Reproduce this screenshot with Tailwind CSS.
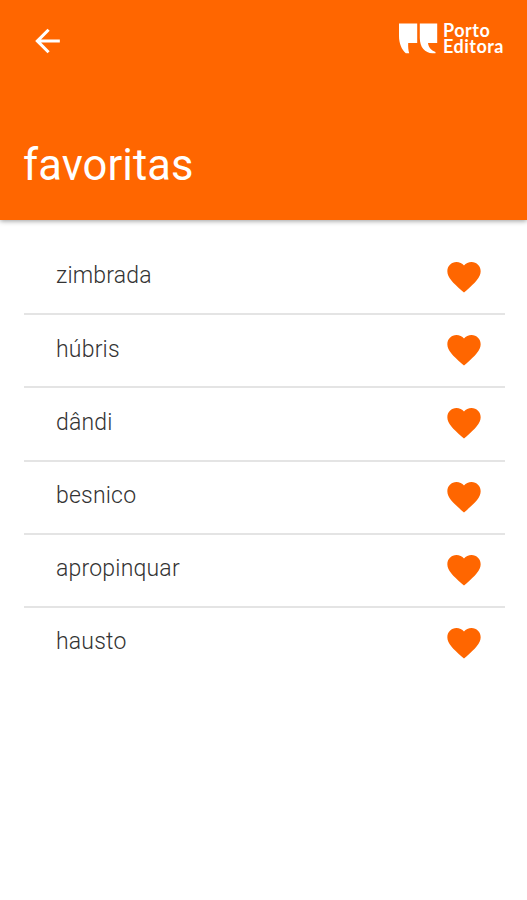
<!DOCTYPE html>
<html lang="pt">
<head>
    <meta charset="UTF-8">
    <meta name="viewport" content="width=device-width, initial-scale=1.0">
    <title>favoritas</title>
    <script src="https://cdn.jsdelivr.net/npm/@tailwindcss/browser@4"></script>
</head>
<body class="bg-white min-h-screen font-[Roboto,sans-serif]">
    <!-- Header -->
    <header class="h-[220px] bg-[#ff6600] text-white shadow-[0_1px_5px_rgba(0,0,0,0.4)] flex flex-col justify-between pt-[22px] pb-[24px] px-[23px]">
        <div class="flex justify-between items-start">
            <button class="ml-[6px]" aria-label="Voltar">
                <svg class="w-[37px] h-[38px]" viewBox="0 0 24 24" fill="currentColor">
                    <path d="M20 11H7.83l5.59-5.59L12 4l-8 8 8 8 1.41-1.41L7.83 13H20v-2z"/>
                </svg>
            </button>
            <div class="flex items-start gap-[5px]">
                <svg class="w-[40px] h-[33px]" viewBox="0 0 40 33" fill="currentColor">
                    <path d="M1 1.5H19.2V21H10.2C10 25 10.3 28.5 11.2 31.3H7.8C3.7 27.5 1 21.5 1 14z"/>
                    <path d="M21.8 1.5H39.2V21H30C30.5 25 33 28.5 37.5 30V31.3H34.5C27 31 21.8 25.5 21.8 16z"/>
                </svg>
                <div class="font-[Lato,sans-serif] font-bold text-[18px] leading-[16px] tracking-[0.5px]">
                    <div>Porto</div>
                    <div>Editora</div>
                </div>
            </div>
        </div>
        <h1 class="text-[43.5px] leading-[60px] tracking-[0.1px]">favoritas</h1>
    </header>

    <!-- Word list -->
    <ul id="wordList" class="mt-[22px] ml-[24px] mr-[22px] text-[23px] font-light tracking-[0.2px] text-[#333333]"></ul>

    <script>
        const words = ["zimbrada", "húbris", "dândi", "besnico", "apropinquar", "hausto"];
        const wordList = document.getElementById("wordList");

        words.forEach((word) => {
            const li = document.createElement("li");
            li.className = "h-[73.2px] pl-[32px] pr-[21px] flex items-center justify-between border-b-2 border-[#e4e4e4] last:border-transparent";
            li.innerHTML = `
                <span class="pb-[2px]">${word}</span>
                <svg class="w-[40px] h-[40px] mb-[1px] text-[#ff6600]" viewBox="0 0 24 24" fill="currentColor">
                    <path d="M12 21.35l-1.45-1.32C5.4 15.36 2 12.28 2 8.5 2 5.42 4.42 3 7.5 3c1.74 0 3.41.81 4.5 2.09C13.09 3.81 14.76 3 16.5 3 19.58 3 22 5.42 22 8.5c0 3.78-3.4 6.86-8.55 11.54L12 21.35z"/>
                </svg>`;
            wordList.appendChild(li);
        });
    </script>
</body>
</html>
